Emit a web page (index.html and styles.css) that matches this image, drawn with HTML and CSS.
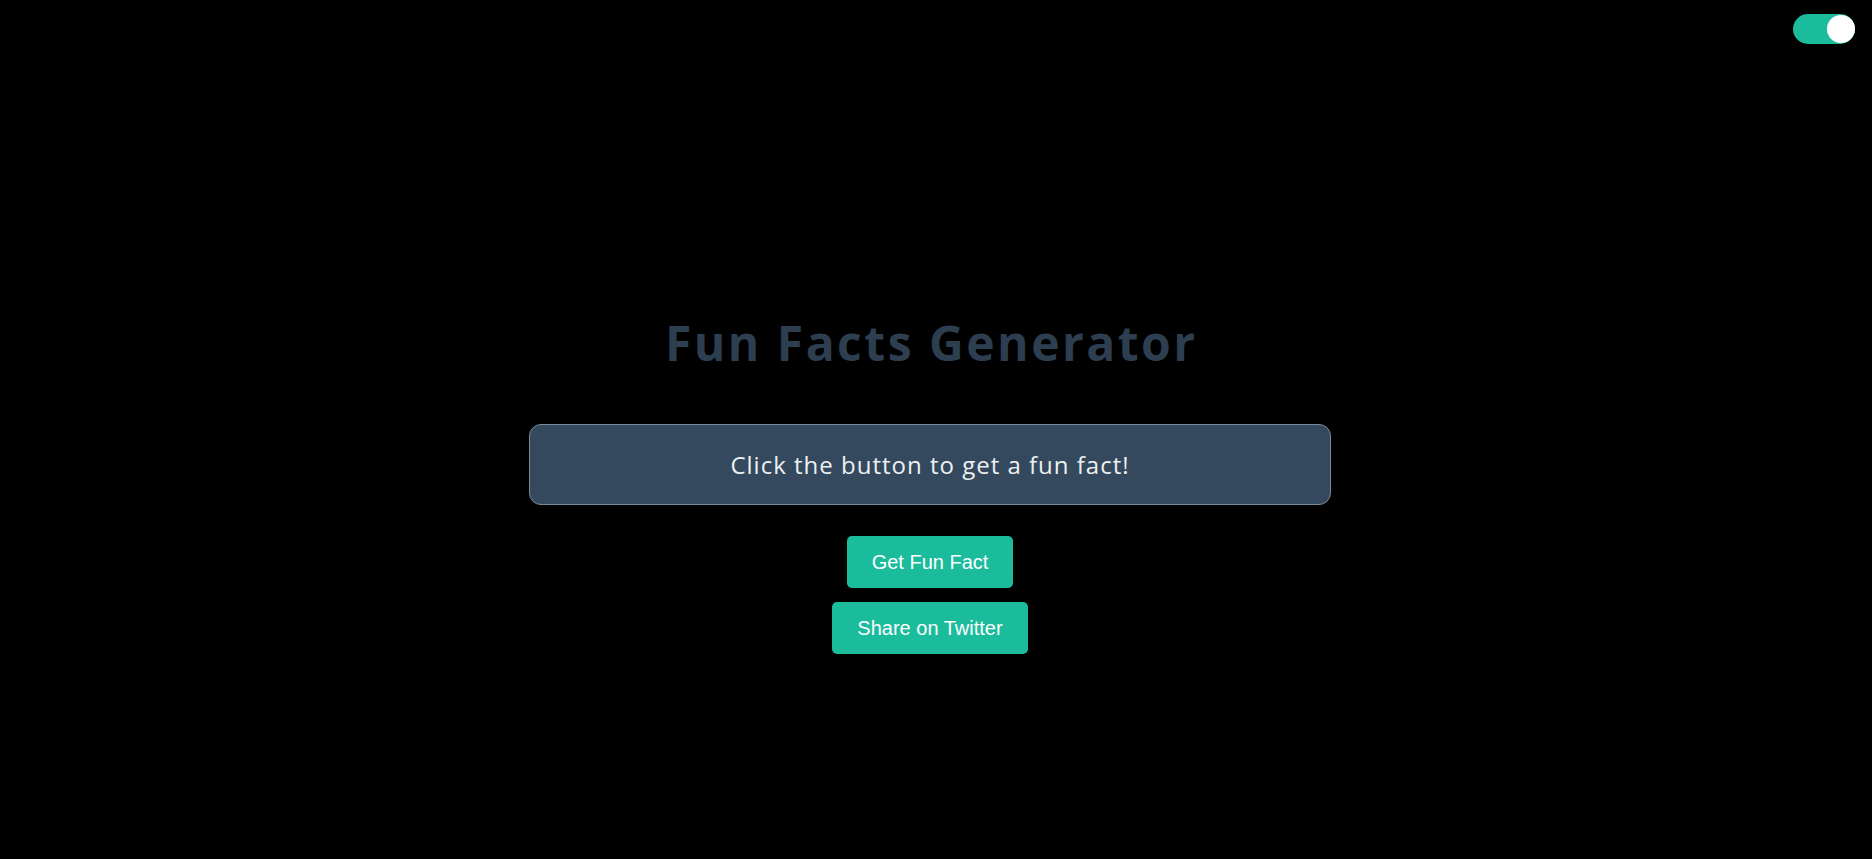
FILE: index.html
```html
<!DOCTYPE html>
<html lang="en">
<head>
<meta charset="utf-8">
<title>Fun Facts Generator</title>
<link rel="stylesheet" href="styles.css">
</head>
<body>
<label class="toggle">
  <span class="knob"></span>
</label>
<main class="app">
  <h1 class="title">Fun Facts Generator</h1>
  <div class="fact-box">Click the button to get a fun fact!</div>
  <div class="actions">
    <button class="btn">Get Fun Fact</button>
    <button class="btn">Share on Twitter</button>
  </div>
</main>
</body>
</html>
```

FILE: styles.css
```css
html, body {
  margin: 0;
  padding: 0;
  background: #000000;
}

body {
  font-family: "Open Sans", "Noto Sans", sans-serif;
  min-height: 859px;
}

.toggle {
  position: absolute;
  top: 14px;
  right: 17px;
  width: 62px;
  height: 30px;
  border-radius: 15px;
  background: #1abc9c;
  display: block;
}

.knob {
  position: absolute;
  top: 1px;
  right: 0;
  width: 28px;
  height: 28px;
  border-radius: 50%;
  background: #ffffff;
}

.app {
  display: flex;
  flex-direction: column;
  align-items: center;
  padding-top: 315px;
  padding-right: 12px;
}

.title {
  margin: 0;
  font-size: 48px;
  line-height: 56px;
  font-weight: 700;
  letter-spacing: 2.5px;
  text-indent: 2.5px;
  color: #2c3e50;
}

.fact-box {
  margin-top: 53px;
  box-sizing: border-box;
  width: 802px;
  height: 81px;
  border: 1px solid #7b8a99;
  border-radius: 12px;
  background: #34495e;
  color: #ecf0f1;
  font-size: 24px;
  letter-spacing: 1px;
  display: flex;
  align-items: center;
  justify-content: center;
}

.actions {
  margin-top: 31px;
  display: flex;
  flex-direction: column;
  align-items: center;
  gap: 14px;
}

.btn {
  font-family: "Liberation Sans", Arial, sans-serif;
  font-size: 20px;
  line-height: 23px;
  height: 52px;
  padding: 0 25px;
  border: none;
  border-radius: 5px;
  background: #1abc9c;
  color: #ffffff;
}
```
